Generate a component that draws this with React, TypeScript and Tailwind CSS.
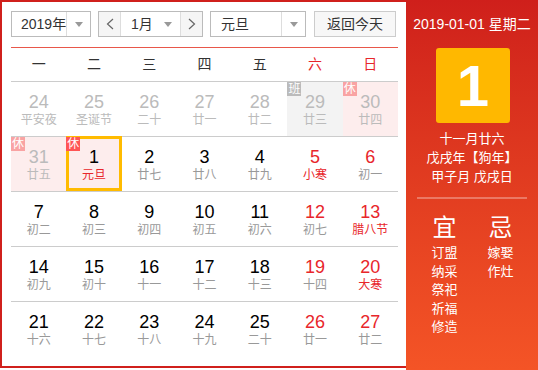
type Cell = {
  d: number;
  l: string;
  prev?: boolean;
  red?: boolean;
  lred?: boolean;
  tag?: '休' | '班';
  sel?: boolean;
};

const rows: Cell[][] = [
  [
    { d: 24, l: '平安夜', prev: true },
    { d: 25, l: '圣诞节', prev: true },
    { d: 26, l: '二十', prev: true },
    { d: 27, l: '廿一', prev: true },
    { d: 28, l: '廿二', prev: true },
    { d: 29, l: '廿三', prev: true, tag: '班' },
    { d: 30, l: '廿四', prev: true, tag: '休' },
  ],
  [
    { d: 31, l: '廿五', prev: true, tag: '休' },
    { d: 1, l: '元旦', lred: true, tag: '休', sel: true },
    { d: 2, l: '廿七' },
    { d: 3, l: '廿八' },
    { d: 4, l: '廿九' },
    { d: 5, l: '小寒', red: true, lred: true },
    { d: 6, l: '初一', red: true },
  ],
  [
    { d: 7, l: '初二' },
    { d: 8, l: '初三' },
    { d: 9, l: '初四' },
    { d: 10, l: '初五' },
    { d: 11, l: '初六' },
    { d: 12, l: '初七', red: true },
    { d: 13, l: '腊八节', red: true, lred: true },
  ],
  [
    { d: 14, l: '初九' },
    { d: 15, l: '初十' },
    { d: 16, l: '十一' },
    { d: 17, l: '十二' },
    { d: 18, l: '十三' },
    { d: 19, l: '十四', red: true },
    { d: 20, l: '大寒', red: true, lred: true },
  ],
  [
    { d: 21, l: '十六' },
    { d: 22, l: '十七' },
    { d: 23, l: '十八' },
    { d: 24, l: '十九' },
    { d: 25, l: '二十' },
    { d: 26, l: '廿一', red: true },
    { d: 27, l: '廿二', red: true },
  ],
];

const weekdays = ['一', '二', '三', '四', '五', '六', '日'];

function Caret() {
  return <span className="block w-0 h-0 border-l-[4px] border-r-[4px] border-t-[5px] border-l-transparent border-r-transparent border-t-[#999]" />;
}

function Chevron({ left }: { left?: boolean }) {
  return (
    <svg width="8" height="12" viewBox="0 0 8 12">
      <polyline
        points={left ? '7,1 1.5,6 7,11' : '1,1 6.5,6 1,11'}
        fill="none"
        stroke="#666"
        strokeWidth="1.2"
      />
    </svg>
  );
}

function DayCell({ c }: { c: Cell }) {
  let bg = '';
  if (c.tag === '休') bg = 'bg-[#fdeded]';
  if (c.tag === '班') bg = 'bg-[#f3f3f3]';

  let num = 'text-black';
  if (c.red) num = 'text-[#e8262b]';
  if (c.prev) num = 'text-[#bbb]';

  let lun = 'text-[#999]';
  if (c.lred) lun = 'text-[#e8262b]';
  if (c.prev) lun = 'text-[#bbb]';

  let badge = 'bg-[#f55]';
  if (c.prev && c.tag === '休') badge = 'bg-[#f9a3a3]';
  if (c.tag === '班') badge = 'bg-[#bbb]';

  return (
    <div className={`relative h-[54px] flex flex-col items-center pt-[9px] ${bg}`}>
      <div className={`text-[18px] leading-[22px] ${num}`}>{c.d}</div>
      <div className={`text-[12px] leading-[14px] ${lun}`}>{c.l}</div>
      {c.sel && <div className="absolute -top-px left-0 right-0 bottom-0 border-[3px] border-[#ffbb00]" />}
      {c.tag && (
        <div className={`absolute top-0 left-0 w-[14px] h-[14px] text-[12px] leading-[14px] text-white text-center ${badge}`}>
          {c.tag}
        </div>
      )}
    </div>
  );
}

export default function App() {
  return (
    <div className="flex w-[538px] h-[370px] bg-white font-['Liberation_Sans','Noto_Sans_CJK_SC',sans-serif]">
      <div className="w-[406px] h-[368px] border-l-2 border-t-2 border-b-2 border-[#d0201c] pl-[9px] pr-[8px]">
        {/* controls */}
        <div className="flex items-center h-[26px] mt-[9px] text-[14px] text-[#333] whitespace-nowrap">
          <div className="flex w-[80px] h-[26px] border border-[#bbb]">
            <div className="flex-1 pl-[9px] leading-[24px]">2019年</div>
            <div className="w-[24px] border-l border-[#ddd] flex items-center justify-center">
              <Caret />
            </div>
          </div>
          <div className="flex w-[105px] h-[26px] ml-[7px] border border-[#bbb]">
            <div className="w-[22px] bg-[#f5f5f5] border-r border-[#ddd] flex items-center justify-center">
              <Chevron left />
            </div>
            <div className="flex-1 flex items-center pl-[10px] pr-[8px] justify-between">
              <span className="leading-[24px]">1月</span>
              <Caret />
            </div>
            <div className="w-[22px] bg-[#f5f5f5] border-l border-[#ddd] flex items-center justify-center">
              <Chevron />
            </div>
          </div>
          <div className="flex w-[96px] h-[26px] ml-[7px] border border-[#bbb]">
            <div className="flex-1 pl-[10px] leading-[24px]">元旦</div>
            <div className="w-[24px] border-l border-[#ddd] flex items-center justify-center">
              <Caret />
            </div>
          </div>
          <div className="w-[82px] h-[26px] ml-[8px] border border-[#ccc] bg-[#f7f7f7] text-center leading-[24px]">
            返回今天
          </div>
        </div>

        {/* weekdays */}
        <div className="mt-[10px] border-t border-[#e8574a] border-b border-b-[#ccc] grid grid-cols-7 h-[35px] items-center">
          {weekdays.map((w, i) => (
            <div key={w} className={`text-center text-[14px] ${i > 4 ? 'text-[#e8262b]' : 'text-[#333]'}`}>
              {w}
            </div>
          ))}
        </div>

        {/* days */}
        {rows.map((r, ri) => (
          <div key={ri} className={`grid grid-cols-7 ${ri < rows.length - 1 ? 'border-b border-[#ccc]' : ''}`}>
            {r.map((c) => (
              <DayCell key={`${ri}-${c.d}`} c={c} />
            ))}
          </div>
        ))}
      </div>

      {/* right panel */}
      <div className="w-[132px] h-[370px] bg-gradient-to-b from-[#cf1f1b] to-[#f45426] flex flex-col items-center text-white">
        <div className="mt-[15px] text-[14px] leading-[18px]">2019-01-01 星期二</div>
        <div className="mt-[15px] ml-[2px] w-[74px] h-[75px] rounded-[3px] bg-[#ffb800] flex items-center justify-center text-[58px] font-bold leading-none">
          1
        </div>
        <div className="mt-[6px] text-[13px] leading-[19px] text-center">
          <div>十一月廿六</div>
          <div>戊戌年【狗年】</div>
          <div>甲子月 戊戌日</div>
        </div>
        <div className="mt-[11px] w-[110px] h-[2px] bg-white/30" />
        <div className="mt-[14px] flex gap-[30px] pl-[1px]">
          <div className="flex flex-col items-center">
            <div className="text-[24px] leading-[30px]">宜</div>
            <div className="text-[13px] leading-[18.5px] text-center mt-[1px]">
              <div>订盟</div>
              <div>纳采</div>
              <div>祭祀</div>
              <div>祈福</div>
              <div>修造</div>
            </div>
          </div>
          <div className="flex flex-col items-center">
            <div className="text-[24px] leading-[30px]">忌</div>
            <div className="text-[13px] leading-[18.5px] text-center mt-[1px]">
              <div>嫁娶</div>
              <div>作灶</div>
            </div>
          </div>
        </div>
      </div>
    </div>
  );
}
